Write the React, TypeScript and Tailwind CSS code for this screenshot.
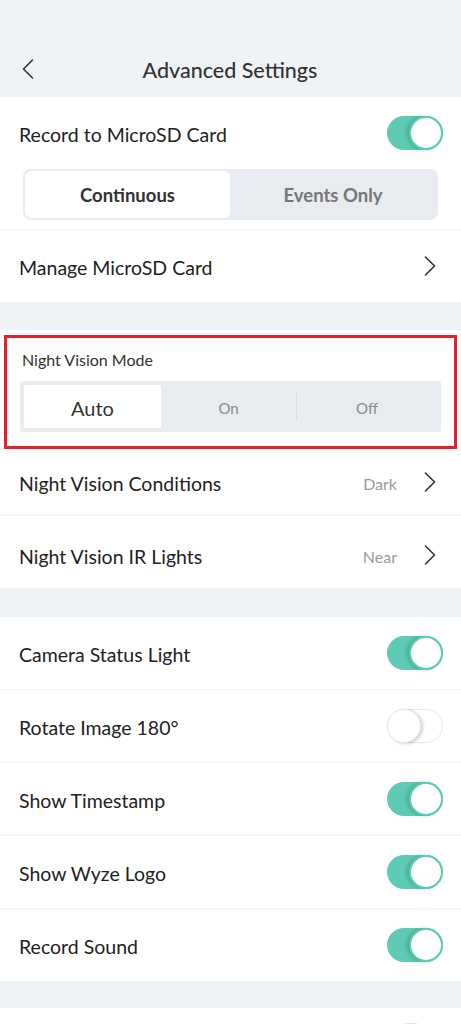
const font = { fontFamily: "Lato, 'Noto Sans', sans-serif" };

const Chevron = ({ dir }: { dir: "left" | "right" }) => (
  <svg width="12" height="20" viewBox="0 0 12 20" fill="none" stroke="#333" strokeWidth="1.6" strokeLinecap="round" strokeLinejoin="round">
    {dir === "right" ? <polyline points="1.5,1 10.5,10 1.5,19" /> : <polyline points="10.5,1 1.5,10 10.5,19" />}
  </svg>
);

const Toggle = ({ on }: { on: boolean }) =>
  on ? (
    <div className="relative h-[34px] w-[56px] rounded-full bg-[#5fcbb4]">
      <div className="absolute right-0 top-0 h-[34px] w-[34px] rounded-full border-2 border-[#5fcbb4] bg-white shadow-[-3px_0_3px_rgba(40,130,110,0.35)]" />
    </div>
  ) : (
    <div className="relative h-[34px] w-[56px] rounded-full border border-[#e6e8ea] bg-white">
      <div className="absolute -left-px -top-px h-[34px] w-[34px] rounded-full border border-[#e6e8ea] bg-white shadow-[2px_1px_3px_rgba(0,0,0,0.18)]" />
    </div>
  );

const Divider = () => <div className="h-px bg-[#f1f2f4]" />;

const ToggleRow = ({ label, on }: { label: string; on: boolean }) => (
  <div className="flex h-[72px] items-center justify-between pl-[19px] pr-[18px]">
    <span className="pt-[4px] text-[19.5px] text-[#222]">{label}</span>
    <Toggle on={on} />
  </div>
);

const LinkRow = ({ label, value, cls = "h-[73px]" }: { label: string; value?: string; cls?: string }) => (
  <div className={`flex ${cls} items-center justify-between pl-[19px] pr-[25px]`}>
    <span className="pt-[4px] text-[19.5px] text-[#222]">{label}</span>
    <div className="flex items-center gap-[27px]">
      {value && <span className="pt-[3px] text-[16px] text-[#9a9a9a]">{value}</span>}
      <Chevron dir="right" />
    </div>
  </div>
);

export default function App() {
  return (
    <div className="min-h-screen bg-[#eff3f6]" style={font}>
      {/* header */}
      <div className="h-[97px] pt-[49px]">
        <div className="grid h-[40px] grid-cols-[1fr_auto_1fr] items-center pl-[22px] pr-[23px]">
          <Chevron dir="left" />
          <h1 className="pt-[2px] text-[21.5px] font-medium text-[#333]">Advanced Settings</h1>
          <div />
        </div>
      </div>

      {/* microSD */}
      <div className="bg-white">
        <ToggleRow label="Record to MicroSD Card" on />
        <div className="mx-[23px] flex h-[51px] w-[415px] rounded-lg bg-[#e8ebef] p-[2px]">
          <div className="flex w-[205px] items-center justify-center rounded-md bg-white pt-[3px] text-[18.5px] font-bold text-[#333]">
            Continuous
          </div>
          <div className="flex flex-1 items-center justify-center pt-[3px] text-[18.5px] font-bold text-[#777]">
            Events Only
          </div>
        </div>
        <div className="h-[9px]" />
        <Divider />
        <LinkRow label="Manage MicroSD Card" cls="h-[72px]" />
      </div>

      <div className="h-[28px]" />

      {/* night vision */}
      <div className="bg-white pt-[5px]">
        <div className="mx-[4px] h-[114px] border-[3px] border-[#e8202a]">
          <div className="pl-[15px] pt-[12px] text-[16px] leading-[20px] text-[#333]">Night Vision Mode</div>
          <div className="ml-[13px] mt-[11px] flex h-[51px] w-[421px] rounded-[3px] bg-[#e8ebef] p-[4px]">
            <div className="flex w-[137px] items-center justify-center rounded-[2px] bg-white pt-[3px] text-[20px] text-[#333]">
              Auto
            </div>
            <div className="flex flex-1 items-center justify-center pt-[3px] text-[15px] text-[#8a8a8a]">On</div>
            <div className="my-[8px] w-px bg-[#d9dce0]" />
            <div className="flex w-[140px] items-center justify-center pt-[3px] text-[15px] text-[#8a8a8a]">Off</div>
          </div>
        </div>
        <LinkRow label="Night Vision Conditions" value="Dark" cls="h-[66px]" />
        <Divider />
        <LinkRow label="Night Vision IR Lights" value="Near" cls="h-[72px] pt-[6px]" />
      </div>

      <div className="h-[29px]" />

      {/* toggles */}
      <div className="bg-white">
        <ToggleRow label="Camera Status Light" on />
        <Divider />
        <ToggleRow label="Rotate Image 180°" on={false} />
        <Divider />
        <ToggleRow label="Show Timestamp" on />
        <Divider />
        <ToggleRow label="Show Wyze Logo" on />
        <Divider />
        <ToggleRow label="Record Sound" on />
      </div>

      <div className="h-[27px]" />

      <div className="h-[60px] bg-white pr-[20px] pt-[15px]">
        <div className="ml-auto h-[30px] w-[60px] rounded-t-full border-t border-[#dcdcdc]" />
      </div>
    </div>
  );
}
